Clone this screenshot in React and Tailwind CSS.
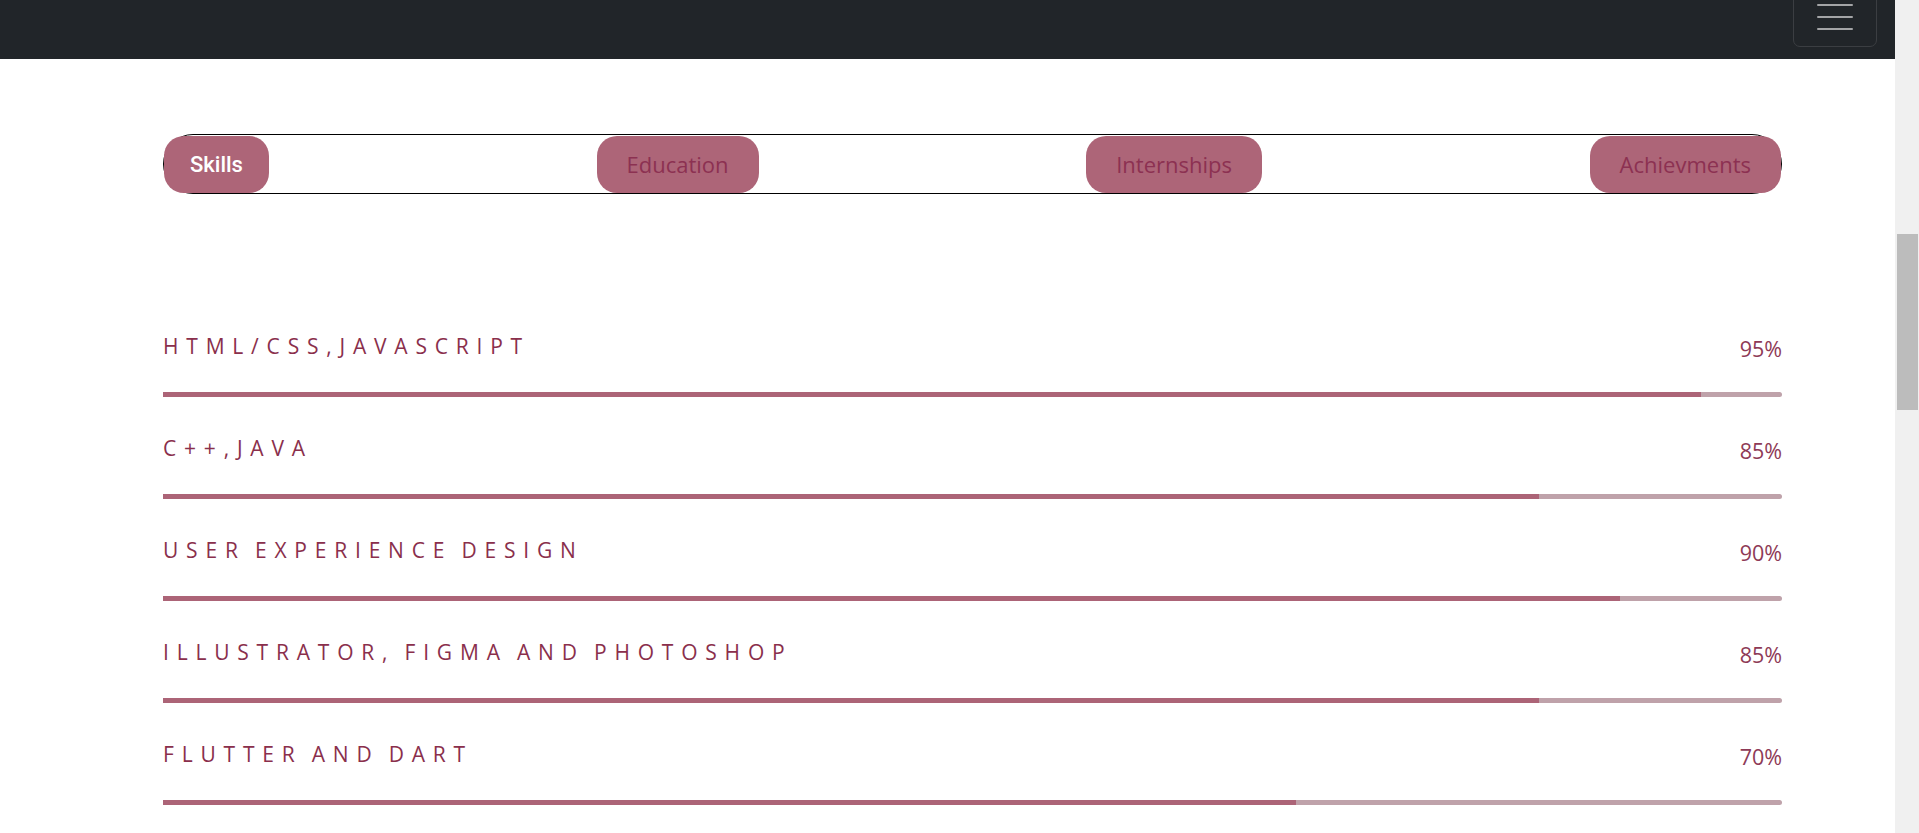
const TABS = ['Skills', 'Education', 'Internships', 'Achievments']

const SKILLS = [
  { name: 'HTML/CSS,JAVASCRIPT', pct: 95 },
  { name: 'C++,JAVA', pct: 85 },
  { name: 'USER EXPERIENCE DESIGN', pct: 90 },
  { name: 'ILLUSTRATOR, FIGMA AND PHOTOSHOP', pct: 85 },
  { name: 'FLUTTER AND DART', pct: 70 },
]

function SkillRow({ skill }) {
  return (
    <div className="flex flex-col">
      <div className="flex items-start justify-between h-[30px]">
        <p className="text-[21px] leading-[30px] font-medium tracking-[7.8px] [word-spacing:-4px] text-[#8a2f4c]">{skill.name}</p>
        <span className="pt-[3px] text-[21.5px] leading-[30px] text-[#8e3a56]">{skill.pct}%</span>
      </div>
      <div className="mt-[31px] h-[5px] w-full rounded-r-full bg-[#bfa2aa] overflow-hidden">
        <div className="h-full bg-[#ac6477]" style={{ width: `${skill.pct}%` }} />
      </div>
    </div>
  )
}

export default function App() {
  return (
    <div className="flex h-[833px] w-full overflow-hidden bg-white" style={{ fontFamily: '"Open Sans", "Noto Sans", sans-serif' }}>
      <div className="flex-1 flex flex-col">
        {/* Navbar */}
        <nav className="h-[59px] bg-[#212529] flex justify-end pr-[18px]">
          <button className="-mt-[14px] h-[61px] w-[84px] rounded-[7px] border border-[#3b3e42] flex flex-col items-center justify-end gap-[10px] pb-[16px]">
            <span className="block h-[2px] w-[36px] rounded-full bg-[#a3a4a6]" />
            <span className="block h-[2px] w-[36px] rounded-full bg-[#a3a4a6]" />
            <span className="block h-[2px] w-[36px] rounded-full bg-[#a3a4a6]" />
          </button>
        </nav>

        <div className="pl-[163px] w-[1782px]">
          {/* Tabs */}
          <div className="mt-[75px] h-[60px] rounded-[30px] border border-black flex items-center justify-between">
            {TABS.map((t, i) => (
              <button
                key={t}
                className={
                  'h-[57px] rounded-[20px] bg-[#ad6578] ' +
                  (i === 0 ? 'px-[26px] text-[22px] text-white font-medium' : 'px-[30px] text-[22px] text-[#8c3152]')
                }
                style={i === 0 ? { fontFamily: 'Roboto, sans-serif' } : undefined}
              >
                {t}
              </button>
            ))}
          </div>

          {/* Skills */}
          <div className="mt-[137px] flex flex-col gap-[36px]">
            {SKILLS.map(s => (
              <SkillRow key={s.name} skill={s} />
            ))}
          </div>
        </div>
      </div>

      {/* Scrollbar */}
      <div className="w-[24px] h-full bg-[#f0f0f0] pl-[2px] pr-[1px]">
        <div className="mt-[234px] h-[176px] bg-[#bcbcbc]" />
      </div>
    </div>
  )
}
